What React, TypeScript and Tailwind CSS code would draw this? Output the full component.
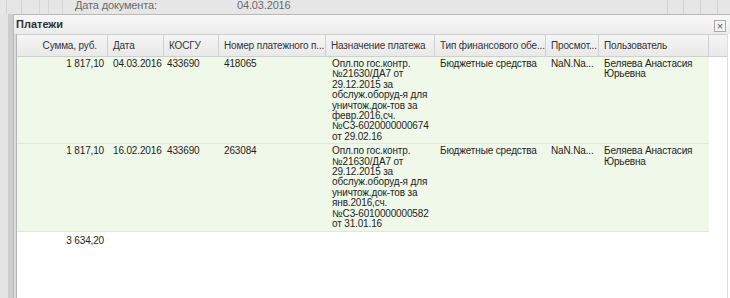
const cols = [
  { title: 'Сумма, руб.', w: 'w-[91px]', right: true },
  { title: 'Дата', w: 'w-[56px]' },
  { title: 'КОСГУ', w: 'w-[55px]' },
  { title: 'Номер платежного п...', w: 'w-[107px]' },
  { title: 'Назначение платежа', w: 'w-[109px]' },
  { title: 'Тип финансового обе...', w: 'w-[111px]' },
  { title: 'Просмот...', w: 'w-[53px]' },
  { title: 'Пользователь', w: 'w-[110px]' },
];

const rows = [
  {
    sum: '1 817,10',
    date: '04.03.2016',
    kosgu: '433690',
    num: '418065',
    purpose: [
      'Опл.по гос.контр.',
      '№21630/ДА7 от',
      '29.12.2015 за',
      'обслуж.оборуд-я для',
      'уничтож.док-тов за',
      'февр.2016,сч.',
      '№С3-6020000000674',
      'от 29.02.16',
    ],
    type: 'Бюджетные средства',
    view: 'NaN.Na...',
    user: ['Беляева Анастасия', 'Юрьевна'],
  },
  {
    sum: '1 817,10',
    date: '16.02.2016',
    kosgu: '433690',
    num: '263084',
    purpose: [
      'Опл.по гос.контр.',
      '№21630/ДА7 от',
      '29.12.2015 за',
      'обслуж.оборуд-я для',
      'уничтож.док-тов за',
      'янв.2016,сч.',
      '№С3-6010000000582',
      'от 31.01.16',
    ],
    type: 'Бюджетные средства',
    view: 'NaN.Na...',
    user: ['Беляева Анастасия', 'Юрьевна'],
  },
];

function Lines({ lines }: { lines: string[] }) {
  return (
    <>
      {lines.map((l, i) => (
        <div key={i} className="whitespace-nowrap">
          {l}
        </div>
      ))}
    </>
  );
}

export default function App() {
  return (
    <div
      className="w-[730px] h-[298px] overflow-hidden flex flex-col bg-[#e3e3e3] text-[10px] tracking-[-0.15px] text-[#1e1e1e]"
      style={{ fontFamily: '"Liberation Sans", Arial, sans-serif' }}
    >
      {/* background form strip */}
      <div className="h-[14px] flex shrink-0 bg-[#e6e6e6] text-[#6a6a6a] text-[11px] leading-[11px]">
        <div className="w-[7px] border-r border-[#d2d2d2]" />
        <div className="w-[15px] border-r border-[#d2d2d2]" />
        <div className="w-[18px] border-r border-[#d6d6d6]" />
        <div className="w-[9px] border-r border-[#d6d6d6]" />
        <div className="w-[14px] border-r border-[#d6d6d6]" />
        <div className="w-[12px]" />
        <div className="w-[162px]">Дата документа:</div>
        <div>04.03.2016</div>
        <div className="flex-1" />
        <div className="w-[16px] border-l border-[#d2d2d2]" />
        <div className="w-[17px] border-l border-[#d2d2d2]" />
        <div className="w-[17px] border-l border-[#d2d2d2]" />
        <div className="w-[13px] border-l border-[#d2d2d2]" />
      </div>

      <div className="flex flex-1 min-h-0">
        {/* left gutter */}
        <div className="w-[13px] flex shrink-0">
          <div className="w-[8px] bg-[#e4e4e4]" />
          <div className="w-[5px] bg-[#cdcdcd]" />
        </div>

        {/* window */}
        <div className="flex-1 flex flex-col border-t border-l border-[#b9b9b9] bg-white">
          <div className="h-[19px] flex items-center justify-between bg-gradient-to-b from-[#f7f7f7] to-[#ececec] pl-[2px] pr-[4px]">
            <span className="font-bold text-[#2f2f2f] text-[11px] tracking-normal">Платежи</span>
            <span className="w-[12px] h-[12px] mt-[3px] border border-[#a9a9a9] bg-[#f4f4f4] flex items-center justify-center text-[#555] text-[11px] leading-none">
              ×
            </span>
          </div>

          <div className="flex flex-1 min-h-0">
            <div className="w-[3px] bg-[#dadada] border-r border-[#b4b4b4]" />
            <div className="flex-1 flex flex-col bg-white border-r border-[#dedede] mr-[2px]">
              {/* header row */}
              <div className="h-[23px] flex border-t border-b border-[#cfcfcf] bg-gradient-to-b from-[#f5f5f5] to-[#e9e9e9] text-[#333]">
                {cols.map((c, i) => (
                  <div
                    key={i}
                    className={`${c.w} shrink-0 h-full flex items-center border-r border-[#d0d0d0] whitespace-nowrap overflow-hidden ${
                      c.right ? 'justify-end pr-[10px]' : 'pl-[5px]'
                    }`}
                  >
                    {c.title}
                  </div>
                ))}
                <div className="flex-1" />
              </div>

              {/* data rows */}
              {rows.map((r, i) => (
                <div
                  key={i}
                  className="flex w-[692px] bg-[#eff8e9] border-b border-[#dfe8d9] leading-[10.4px] pt-[2px] pb-[1px]"
                >
                  <div className="w-[91px] shrink-0 text-right pr-[4px]">{r.sum}</div>
                  <div className="w-[56px] shrink-0 pl-[5px]">{r.date}</div>
                  <div className="w-[55px] shrink-0 pl-[3px]">{r.kosgu}</div>
                  <div className="w-[107px] shrink-0 pl-[5px]">{r.num}</div>
                  <div className="w-[109px] shrink-0 pl-[6px]">
                    <Lines lines={r.purpose} />
                  </div>
                  <div className="w-[111px] shrink-0 pl-[5px] whitespace-nowrap">{r.type}</div>
                  <div className="w-[53px] shrink-0 pl-[5px] whitespace-nowrap">{r.view}</div>
                  <div className="w-[110px] shrink-0 pl-[5px]">
                    <Lines lines={r.user} />
                  </div>
                </div>
              ))}

              {/* total */}
              <div className="flex pt-[4px]">
                <div className="w-[91px] text-right pr-[4px] leading-[10px]">3 634,20</div>
              </div>
            </div>
          </div>
        </div>
      </div>
    </div>
  );
}
